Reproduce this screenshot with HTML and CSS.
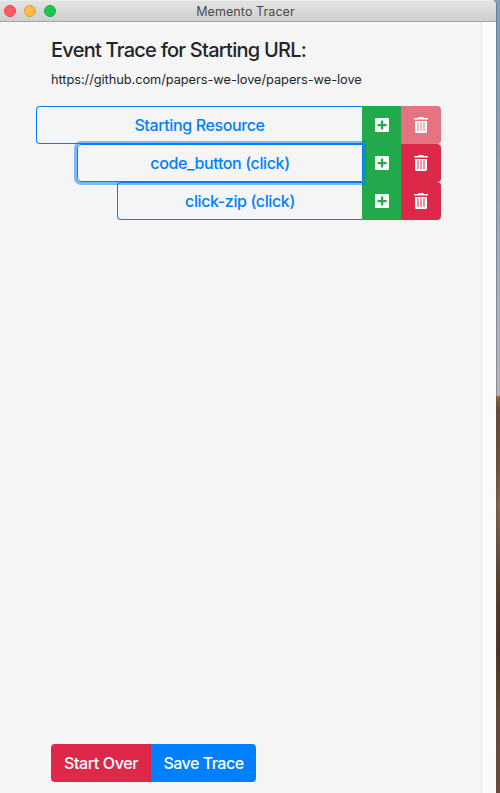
FILE: index.html
```html
<!DOCTYPE html>
<html lang="en">
<head>
<meta charset="utf-8">
<title>Memento Tracer</title>
<link rel="stylesheet" href="styles.css">
</head>
<body>
<svg class="defs" width="0" height="0">
  <symbol id="plus" viewBox="0 0 14 14"><path fill-rule="evenodd" d="M1.2 0h11.6Q14 0 14 1.2v11.6q0 1.2-1.2 1.2H1.2Q0 14 0 12.8V1.2Q0 0 1.2 0zM6 2.600V6H2.600v2.200H6v3.400h2.200V8.200h3.400V6H8.200V2.600z"/></symbol>
  <symbol id="trash" viewBox="0 0 14 16"><path d="M.5 1H4l.8-.8Q5 0 5.300 0h3.400Q9 0 9.200.2L10 1h3.500q.5 0 .5.500v1H0v-1Q0 1 .5 1z"/><path fill-rule="evenodd" d="M1 4h12v10.500q0 1.500-1.500 1.500h-9Q1 16 1 14.500zM3 5.500v8.500h2V5.500zM6 5.500v8.500h2V5.500zM9 5.500v8.500h2V5.500z"/><path opacity=".5" d="M3 5.500h2v8.500H3zM6 5.500h2v8.500H6zM9 5.500h2v8.500H9z"/></symbol>
</svg>
<div class="window">
  <header class="titlebar">
    <div class="lights"><i class="close"></i><i class="minimize"></i><i class="expand"></i></div>
    <span class="title">Memento Tracer</span>
  </header>
  <div class="body">
    <main class="content">
      <h1>Event Trace for Starting URL:</h1>
      <p class="url">https://github.com/papers-we-love/papers-we-love</p>
      <div class="events">
        <div class="row">
          <button class="event">Starting Resource</button>
          <button class="add"><svg width="14" height="14"><use href="#plus"/></svg></button>
          <button class="remove disabled"><svg width="14" height="16"><use href="#trash"/></svg></button>
        </div>
        <div class="row level1">
          <button class="event focused">code_button (click)</button>
          <button class="add"><svg width="14" height="14"><use href="#plus"/></svg></button>
          <button class="remove"><svg width="14" height="16"><use href="#trash"/></svg></button>
        </div>
        <div class="row level2">
          <button class="event">click-zip (click)</button>
          <button class="add"><svg width="14" height="14"><use href="#plus"/></svg></button>
          <button class="remove"><svg width="14" height="16"><use href="#trash"/></svg></button>
        </div>
      </div>
      <footer class="actions"><button class="over">Start Over</button><button class="save">Save Trace</button></footer>
    </main>
    <div class="gutter"></div>
  </div>
</div>
</body>
</html>
```
FILE: styles.css
```css
* { box-sizing: border-box; }
body {
  margin: 0;
  height: 793px;
  overflow: hidden;
  font-family: Inter, "Liberation Sans", sans-serif;
  color: #212529;
  background: linear-gradient(#7f9cba 0, #8fa3b5 140px, #a9b0bb 290px, #b5b4bc 395px, #8c6239 397px, #6f4728 410px, #77502f 470px, #8b623f 505px, #5c3c27 590px, #4d2e20 650px, #6b452c 710px, #75482c 793px);
}
.defs { position: absolute; }
.window {
  display: flex;
  flex-direction: column;
  width: 497px;
  height: 793px;
  border-right: 1px solid rgba(70, 80, 90, .4);
  border-top-right-radius: 5px;
  overflow: hidden;
}
.titlebar {
  flex: none;
  display: grid;
  grid-template-columns: 60px 1fr 65px;
  align-items: center;
  height: 22px;
  background: linear-gradient(#f3f3f3 0, #e3e3e3 1px, #cfcfcf 21px);
  border-bottom: 1px solid #a6a6a6;
}
.lights { display: flex; gap: 8px; padding-left: 4px; }
.lights i { width: 12px; height: 12px; border-radius: 50%; border: 1px solid; }
.lights .close { background: #ff5a5f; border-color: #e4484f; }
.lights .minimize { background: #ffbd45; border-color: #e0a033; }
.lights .expand { background: #1bca4c; border-color: #14ae3c; }
.title { padding-top: 2px; text-align: center; font-size: 12.5px; line-height: 19px; color: #4b4b4b; letter-spacing: .08px; white-space: nowrap; }
.body { flex: 1; display: flex; background: #f5f5f5; }
.content { width: 481px; display: flex; flex-direction: column; padding: 16px 40px 11px 36px; }
.gutter { flex: 1; background: #fbfbfb; border-left: 1px solid #e4e4e4; }
h1 { margin: 0 0 8px 15px; font-size: 20px; line-height: 24px; font-weight: 550; letter-spacing: -.75px; white-space: nowrap; }
.url { margin: 0 0 16px 15px; font-size: 12.8px; line-height: 20px; letter-spacing: -.05px; white-space: nowrap; }
button { border: 0; padding: 0; font: 450 16px/24px Inter, "Liberation Sans", sans-serif; letter-spacing: -.38px; }
.row { display: flex; height: 38px; }
.level1 { margin-left: 41px; }
.level2 { margin-left: 81px; }
.event { flex: 1; color: #0080ff; border: 1px solid #0080ff; border-right: 0; border-radius: 4px 0 0 4px; background: transparent; }
.focused { position: relative; margin-right: -1px; border-right: 1px solid #0080ff; box-shadow: 0 0 0 3px rgba(0, 128, 255, .5); z-index: 1; }
.add { width: 39px; background: #22a94c; color: #fff; }
.remove { width: 40px; background: #de2849; color: #fff; border-radius: 0 4px 4px 0; }
.disabled { background: #e57381; }
.add svg, .remove svg { display: block; margin: auto; fill: #fff; }
.actions { display: flex; margin: auto 0 0 15px; }
.actions button { height: 38px; color: #fff; }
.over { width: 100px; background: #de2849; border-radius: 4px 0 0 4px; }
.actions .save { width: 105px; background: #0080ff; border-radius: 0 4px 4px 0; letter-spacing: -.5px; }
```
